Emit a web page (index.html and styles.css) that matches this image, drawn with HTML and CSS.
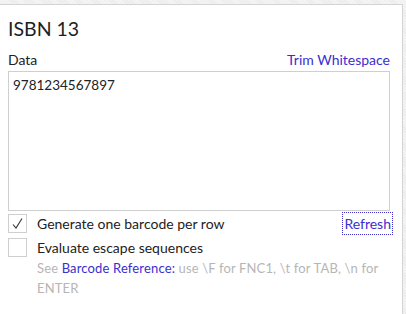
FILE: index.html
```html
<!DOCTYPE html>
<html>
<head>
<meta charset="utf-8">
<link rel="stylesheet" href="styles.css">
</head>
<body>
<div class="panel">
  <h1 class="title">ISBN 13</h1>
  <div class="label-row">
    <span class="label">Data</span>
    <a class="link">Trim Whitespace</a>
  </div>
  <div class="data-box">9781234567897</div>
  <div class="check-row">
    <span class="box"><svg width="13" height="13" viewBox="0 0 13 13"><path d="M2 7.5 L5 11 L11 1.5" fill="none" stroke="#333" stroke-width="1.1"/></svg></span>
    <span class="check-label">Generate one barcode per row</span>
    <a class="refresh">Refresh</a>
  </div>
  <div class="check-row">
    <span class="box"></span>
    <span class="check-label">Evaluate escape sequences</span>
  </div>
  <p class="help">See <a class="ref">Barcode Reference:</a> use \F for FNC1, \t for TAB, \n for ENTER</p>
</div>
</body>
</html>
```

FILE: styles.css
```css
html, body { margin: 0; padding: 0; }
body {
  width: 406px;
  height: 314px;
  overflow: hidden;
  background-color: #efefef;
  background-image: repeating-linear-gradient(45deg, #f6f6f6 0 1px, #ebebeb 1px 2px);
  font-family: "Lato", "Open Sans", sans-serif;
  color: #222;
}
.panel {
  margin-top: 4px;
  width: 382px;
  height: 309px;
  padding: 0 12px 0 8px;
  background: #fff;
  border-top: 1px solid #d4d4d4;
  border-right: 1px solid #d4d4d4;
}
.title {
  margin: 0;
  padding-top: 12px;
  font-size: 19.5px;
  font-weight: 400;
  line-height: 24px;
  height: 34px;
  color: #1e1e1e;
}
.label-row {
  display: flex;
  justify-content: space-between;
  font-size: 14px;
  line-height: 18px;
  height: 20px;
}
.link, .refresh, .ref { color: #3b2ed0; }
.data-box {
  box-sizing: border-box;
  width: 382px;
  height: 140px;
  border: 1px solid #cfcfcf;
  padding: 4px 4px;
  font-size: 13.5px;
  line-height: 18px;
}
.check-row {
  display: flex;
  align-items: center;
  height: 24px;
  font-size: 14px;
}
.box {
  box-sizing: border-box;
  width: 19px;
  height: 19px;
  border: 1px solid #cfcfcf;
  display: flex;
  align-items: center;
  justify-content: center;
  margin-right: 10px;
}
.check-label { flex: 1; }
.refresh {
  outline: 1px dotted #3b2ed0;
  padding: 2px 1px;
  margin-right: -2px;
}
.help {
  margin: -1px 0 0 29px;
  font-size: 13px;
  letter-spacing: 0.15px;
  line-height: 20px;
  color: #b6b6b6;
  width: 350px;
}
```
